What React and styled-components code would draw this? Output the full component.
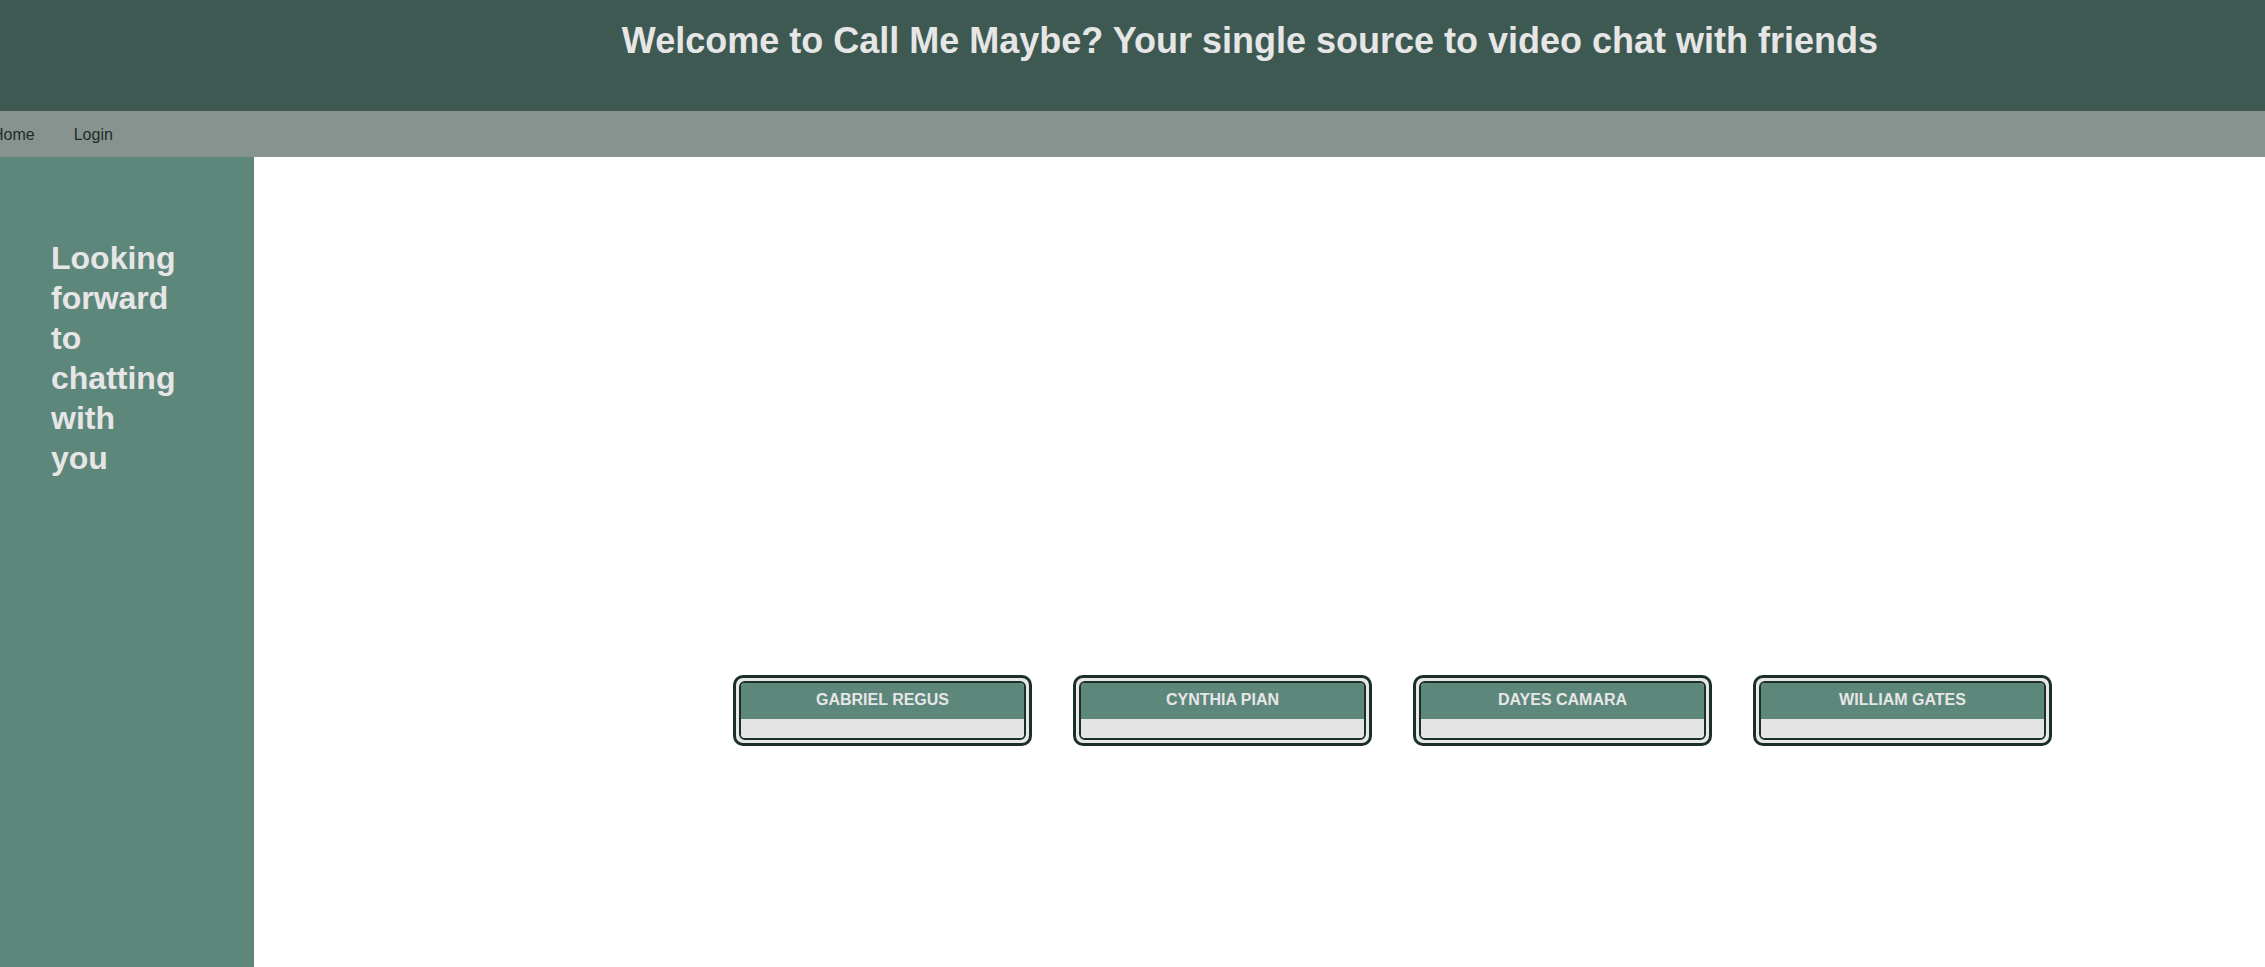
import React from 'react';
import styled, { createGlobalStyle } from 'styled-components';

const GlobalStyle = createGlobalStyle`
  html, body {
    margin: 0;
    padding: 0;
    background: #ffffff;
    font-family: "Liberation Sans", Arial, sans-serif;
  }
`;

const Page = styled.div`
  display: flex;
  flex-direction: column;
  height: 100vh;
  overflow: hidden;
`;

const Header = styled.header`
  height: 111px;
  background-color: #3d5952;
  padding: 20px 0 0 235px;
  box-sizing: border-box;
`;

const Title = styled.h1`
  margin: 0;
  font-size: 36px;
  font-weight: bold;
  color: #e6e6e6;
  text-align: center;
  white-space: nowrap;
`;

const NavBar = styled.nav`
  height: 46px;
  padding-top: 2px;
  box-sizing: border-box;
  background-color: #87938f;
  display: flex;
  align-items: center;
  gap: 39px;
  margin-left: -8px;
`;

const NavLink = styled.a`
  font-size: 16px;
  color: #1f2a2c;
  text-decoration: none;
  cursor: pointer;
`;

const Body = styled.div`
  flex: 1;
  display: flex;
`;

const Sidebar = styled.aside`
  width: 254px;
  flex-shrink: 0;
  background-color: #5e877c;
  padding: 81px 0 0 51px;
  box-sizing: border-box;
`;

const Tagline = styled.h2`
  margin: 0;
  width: 126px;
  font-size: 32px;
  line-height: 40px;
  font-weight: bold;
  color: #e6e6e6;
`;

const Main = styled.main`
  flex: 1;
  display: flex;
  align-items: flex-start;
  gap: 41px;
  padding: 518px 0 0 479px;
`;

const Card = styled.div`
  width: 299px;
  box-sizing: border-box;
  border: 3px solid #1b2f28;
  border-radius: 10px;
  background-color: #e8e8e8;
  padding: 3px;
`;

const CardInner = styled.div`
  border: 2px solid #1b2f28;
  border-radius: 6px;
  overflow: hidden;
`;

const CardName = styled.div`
  height: 36px;
  box-sizing: border-box;
  padding-top: 1px;
  line-height: 32px;
  background-color: #5e877c;
  color: #e6e6e6;
  font-size: 16px;
  font-weight: bold;
  text-align: center;
`;

const CardFooter = styled.div`
  height: 19px;
  background-color: #e4e4e4;
`;

const friends = ['GABRIEL REGUS', 'CYNTHIA PIAN', 'DAYES CAMARA', 'WILLIAM GATES'];

const App = () => {
  return (
    <Page>
      <GlobalStyle />
      <Header>
        <Title>Welcome to Call Me Maybe? Your single source to video chat with friends</Title>
      </Header>
      <NavBar>
        <NavLink>Home</NavLink>
        <NavLink>Login</NavLink>
      </NavBar>
      <Body>
        <Sidebar>
          <Tagline>Looking forward to chatting with you</Tagline>
        </Sidebar>
        <Main>
          {friends.map((name) => (
            <Card key={name}>
              <CardInner>
                <CardName>{name}</CardName>
                <CardFooter />
              </CardInner>
            </Card>
          ))}
        </Main>
      </Body>
    </Page>
  );
};

export default App;
